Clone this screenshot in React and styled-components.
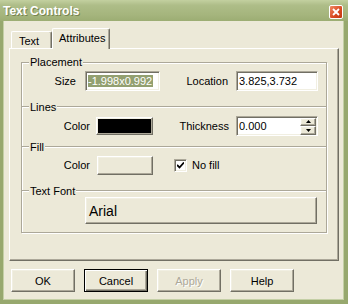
import React from "react";
import styled, { createGlobalStyle, css } from "styled-components";

const GlobalStyle = createGlobalStyle`
  html, body { margin: 0; padding: 0; background: #ece9d8; }
  body { font-family: "Liberation Sans", Arial, sans-serif; font-size: 11px; color: #000; }
`;

const raised = css`
  border: 1px solid;
  border-color: #fff #716f64 #716f64 #fff;
  box-shadow: inset -1px -1px 0 #aca899, inset 1px 1px 0 #f1efe2;
`;

const sunken = css`
  border: 1px solid;
  border-color: #aca899 #fff #fff #aca899;
  box-shadow: inset 1px 1px 0 #716f64, inset -1px -1px 0 #f1efe2;
`;

const etched = css`
  border-top: 1px solid #aca899;
  border-bottom: 1px solid #fff;
`;

const Window = styled.div`
  width: 348px;
  height: 304px;
  display: flex;
  flex-direction: column;
  box-sizing: border-box;
`;

const TitleBar = styled.div`
  height: 21px;
  flex: none;
  display: flex;
  justify-content: space-between;
  align-items: flex-start;
  padding: 0 5px 0 3px;
  background: linear-gradient(#c3d0a0 0%, #aebd88 25%, #a5b57d 70%, #9cad73 100%);
  box-sizing: border-box;
`;

const Title = styled.span`
  font-weight: bold;
  font-size: 12px;
  line-height: 12px;
  margin-top: 5px;
  color: #fff;
  text-shadow: 1px 1px 0 #76844f;
`;

const CloseBox = styled.div`
  width: 14px;
  height: 14px;
  margin-top: 5px;
  box-sizing: border-box;
  border: 1px solid #fff;
  border-radius: 2px;
  background: linear-gradient(135deg, #f08a64, #d8471f 60%, #c13a12);
  display: flex;
  align-items: center;
  justify-content: center;
`;

const Body = styled.div`
  flex: 1;
  display: flex;
  flex-direction: column;
  background: #ece9d8;
  border-left: 3px solid #97a86e;
  border-right: 4px solid #97a86e;
  border-bottom: 4px solid #97a86e;
  box-shadow: inset 1px 0 0 #c4cfa5, inset -1px -1px 0 #c4cfa5;
  padding-top: 7px;
`;

const TabRow = styled.div`
  display: flex;
  align-items: flex-end;
  margin-left: 8px;
  height: 20px;
  position: relative;
  z-index: 1;
`;

const Tab = styled.div`
  box-sizing: border-box;
  background: #ece9d8;
  border-top: 1px solid #fff;
  border-left: 1px solid #fff;
  border-right: 1px solid #716f64;
  box-shadow: inset -1px 0 0 #aca899;
  border-radius: 2px 2px 0 0;
  width: ${(p) => p.w}px;
  padding-left: ${(p) => p.pad}px;
  ${(p) =>
    p.active
      ? css`
          height: 21px;
          margin-bottom: -1px;
          padding-top: 3px;
        `
      : css`
          height: 17px;
          padding-top: 3px;
        `}
`;

const Panel = styled.div`
  margin-left: 6px;
  width: 330px;
  height: 213px;
  box-sizing: border-box;
  border-top: 1px solid #fff;
  border-left: 1px solid #fff;
  border-right: 1px solid #716f64;
  border-bottom: 1px solid #716f64;
  box-shadow: inset -1px -1px 0 #aca899;
  padding: 7px 0 0 11px;
`;

const Group = styled.fieldset`
  margin: 0;
  padding: 0 0 8px 0;
  width: 306px;
  box-sizing: border-box;
  min-width: 0;
  border: 1px solid #aca899;
  box-shadow: 1px 1px 0 #fff, inset 1px 1px 0 #fff;
`;

const Legend = styled.legend`
  margin-left: 7px;
  padding: 0 1px;
  line-height: 12px;
  background: #ece9d8;
`;

const SectionHead = styled.div`
  display: flex;
  align-items: center;
  height: 12px;
  margin-top: ${(p) => p.mt}px;
  &::before {
    content: "";
    width: 7px;
    ${etched}
  }
  &::after {
    content: "";
    flex: 1;
    ${etched}
  }
  span {
    padding: 0 1px;
  }
`;

const Row = styled.div`
  display: flex;
  align-items: center;
  height: 20px;
  margin-top: ${(p) => p.mt}px;
`;

const Label = styled.span`
  width: ${(p) => p.w}px;
  padding-right: ${(p) => p.pr}px;
  box-sizing: border-box;
  text-align: right;
  flex: none;
`;

const Field = styled.div`
  ${sunken}
  background: #fff;
  width: ${(p) => p.w}px;
  height: 20px;
  box-sizing: border-box;
  display: flex;
  align-items: center;
  padding: 0 1px 0 2px;
  flex: none;
`;

const Value = styled.span`
  flex: 1;
  white-space: nowrap;
  line-height: 13px;
`;

const Selected = styled.span`
  background: #93a070;
  color: #fff;
  padding: 0 1px 0 0;
`;

const Spin = styled.div`
  display: flex;
  flex-direction: column;
  width: 16px;
  height: 17px;
`;

const SpinBtn = styled.div`
  ${raised}
  flex: 1;
  background: #ece9d8;
  display: flex;
  align-items: center;
  justify-content: center;
`;

const Swatch = styled.div`
  ${raised}
  width: ${(p) => p.w}px;
  height: ${(p) => p.h}px;
  box-sizing: border-box;
  background: ${(p) => p.color};
  flex: none;
`;

const Check = styled.div`
  ${sunken}
  width: 13px;
  height: 13px;
  box-sizing: border-box;
  background: #fff;
  margin-left: 21px;
  margin-right: 5px;
  display: flex;
  align-items: center;
  justify-content: center;
`;

const FontButton = styled.div`
  ${raised}
  margin-left: 63px;
  width: 232px;
  height: 27px;
  box-sizing: border-box;
  display: flex;
  align-items: center;
  padding-left: 3px;
  font-size: 14px;
`;

const ButtonRow = styled.div`
  display: flex;
  gap: 9px;
  margin: 8px 0 0 8px;
`;

const Button = styled.div`
  width: 64px;
  height: 23px;
  box-sizing: border-box;
  background: #ece9d8;
  display: flex;
  align-items: center;
  justify-content: center;
  ${(p) =>
    p.primary
      ? css`
          border: 1px solid #000;
          box-shadow: inset 1px 1px 0 #fff, inset -1px -1px 0 #716f64, inset -2px -2px 0 #aca899;
        `
      : raised}
  ${(p) =>
    p.disabled &&
    css`
      color: #aca899;
      text-shadow: 1px 1px 0 #fff;
    `}
`;

const Arrow = ({ up }) => (
  <svg width="5" height="3" viewBox="0 0 5 3">
    <path d={up ? "M2.5 0 L5 3 L0 3 Z" : "M0 0 L5 0 L2.5 3 Z"} fill="#000" />
  </svg>
);

export default function App() {
  return (
    <>
      <GlobalStyle />
      <Window>
        <TitleBar>
          <Title>Text Controls</Title>
          <CloseBox>
            <svg width="8" height="8" viewBox="0 0 8 8">
              <path d="M1 1 L7 7 M7 1 L1 7" stroke="#fff" strokeWidth="1.8" />
            </svg>
          </CloseBox>
        </TitleBar>
        <Body>
          <TabRow>
            <Tab w={41} pad={7}>Text</Tab>
            <Tab active w={58} pad={6}>Attributes</Tab>
          </TabRow>
          <Panel>
            <Group>
              <Legend>Placement</Legend>
              <Row mt={3}>
                <Label w={63} pr={9}>Size</Label>
                <Field w={75}>
                  <Value>
                    <Selected>-1.998x0.992</Selected>
                  </Value>
                </Field>
                <Label w={76} pr={8}>Location</Label>
                <Field w={82}>
                  <Value>3.825,3.732</Value>
                </Field>
              </Row>

              <SectionHead mt={10}>
                <span>Lines</span>
              </SectionHead>
              <Row mt={3}>
                <Label w={74} pr={6}>Color</Label>
                <Swatch w={57} h={18} color="#000" />
                <Label w={83} pr={7}>Thickness</Label>
                <Field w={82}>
                  <Value>0.000</Value>
                  <Spin>
                    <SpinBtn>
                      <Arrow up />
                    </SpinBtn>
                    <SpinBtn>
                      <Arrow />
                    </SpinBtn>
                  </Spin>
                </Field>
              </Row>

              <SectionHead mt={5}>
                <span>Fill</span>
              </SectionHead>
              <Row mt={2}>
                <Label w={75} pr={7}>Color</Label>
                <Swatch w={56} h={19} color="#ece9d8" />
                <Check>
                  <svg width="7" height="7" viewBox="0 0 7 7">
                    <path d="M0 3 L2.5 5.5 L7 0.5" stroke="#000" strokeWidth="1.8" fill="none" />
                  </svg>
                </Check>
                <span>No fill</span>
              </Row>

              <SectionHead mt={10}>
                <span>Text Font</span>
              </SectionHead>
              <FontButton>Arial</FontButton>
            </Group>
          </Panel>
          <ButtonRow>
            <Button>OK</Button>
            <Button primary>Cancel</Button>
            <Button disabled>Apply</Button>
            <Button>Help</Button>
          </ButtonRow>
        </Body>
      </Window>
    </>
  );
}
